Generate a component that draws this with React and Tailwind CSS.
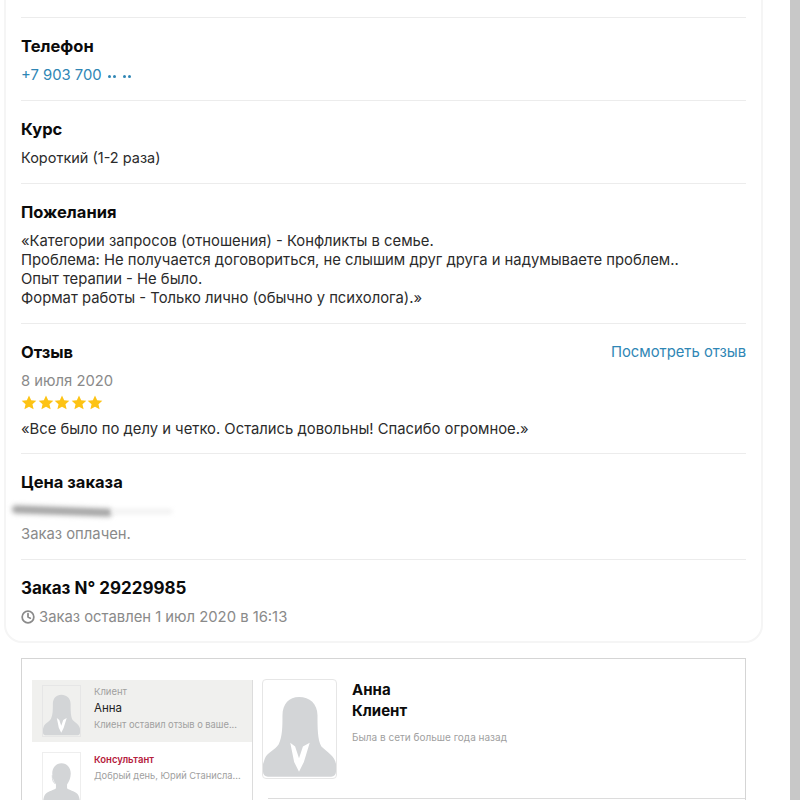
import { Clock } from 'lucide-react';

const FONT = { fontFamily: 'Inter, "Noto Sans", sans-serif' };

function Woman({ className }) {
  return (
    <svg viewBox="0 0 75 100" className={className}>
      <path
        fill="#d3d5d7"
        d="M37 17C27 17 20 24 20 36C20 48 20 58 16 66C12 72 5 74 2 80L0 86V94C0 97 2 99 5 99H70C73 99 75 97 75 94V86C74 78 66 74 60 68C56 62 56 48 56 36C56 24 48 17 37 17z"
      />
      <path fill="#ffffff" d="M28 64L33 68L37 80L41 68L48 64L42 84L37 94L32 84z" />
    </svg>
  );
}

function Man({ className }) {
  return (
    <svg viewBox="0 -3 40 52" className={className}>
      <path
        fill="#d3d5d7"
        d="M20 7c-6 0-10 5-10 11 0 5 2 9 4 12v4c-2 2-8 3-11 6-2 2-3 6-3 12h40c0-6-1-10-3-12-3-3-9-4-11-6v-4c2-3 4-7 4-12 0-6-4-11-10-11z"
      />
      <path fill="none" stroke="#d3d5d7" strokeWidth="1" d="M10 20c0 5 1 8 3 9" />
    </svg>
  );
}

function Section({ title, titleClass, children, right, last }) {
  return (
    <div className={`border-t border-[#ececec] pt-[17px] ${last ? '' : 'pb-[14px]'}`}>
      <div className="flex items-center justify-between h-[22px]">
        <h3 className={`font-bold text-[#0b0b0b] leading-[22px] ${titleClass || 'text-[16.5px]'}`}>{title}</h3>
        {right}
      </div>
      {children}
    </div>
  );
}

export default function App() {
  return (
    <div className="h-[800px] overflow-hidden bg-white flex" style={FONT}>
      <div className="flex-1 min-w-0">
        <div className="ml-1 w-[759px] mt-[-40px] h-[683px] rounded-b-[18px] border-2 border-[#f5f5f5] pl-[15px] pr-[15px] pt-[55px]">
          <Section title="Телефон">
            <p className="mt-[7px] flex items-center gap-[6px] text-[14.8px] leading-[22px] text-[#2f86b5]">
              <span>+7 903 700</span>
              <span className="flex items-center gap-[7px] pt-[2px]">
                <span className="flex gap-[2px]">
                  <span className="w-[3px] h-[3px] rounded-full bg-[#2f86b5]" />
                  <span className="w-[3px] h-[3px] rounded-full bg-[#2f86b5]" />
                </span>
                <span className="flex gap-[2px]">
                  <span className="w-[3px] h-[3px] rounded-full bg-[#2f86b5]" />
                  <span className="w-[3px] h-[3px] rounded-full bg-[#2f86b5]" />
                </span>
              </span>
            </p>
          </Section>
          <Section title="Курс">
            <p className="mt-[7px] text-[14.5px] leading-[22px] text-[#2b2b2b]">Короткий (1-2 раза)</p>
          </Section>
          <Section title="Пожелания">
            <p className="mt-[9px] mb-[1px] text-[14.8px] leading-[19px] text-[#2b2b2b]">
              «Категории запросов (отношения) - Конфликты в семье.
              <br />
              Проблема: Не получается договориться, не слышим друг друга и надумываете проблем..
              <br />
              Опыт терапии - Не было.
              <br />
              Формат работы - Только лично (обычно у психолога).»
            </p>
          </Section>
          <Section
            title="Отзыв"
            right={<a className="text-[14.8px] text-[#2f86b5]">Посмотреть отзыв</a>}
          >
            <p className="mt-[8px] text-[14.8px] leading-[20px] text-[#8a8a8a]">8 июля 2020</p>
            <div className="flex h-[14px] mt-[4px] gap-[0.5px]">
              {[0, 1, 2, 3, 4].map((i) => (
                <svg key={i} viewBox="0 0 16 16" className="w-4 h-[15px]">
                  <path fill="#fdc314" d="M8 .5L10.3 5.6L15.8 6.2L11.7 9.9L12.9 15.3L8 12.5L3.1 15.3L4.3 9.9L.2 6.2L5.7 5.6z" />
                </svg>
              ))}
            </div>
            <p className="mt-[11px] text-[14.8px] leading-[19px] text-[#2b2b2b]">
              «Все было по делу и четко. Остались довольны! Спасибо огромное.»
            </p>
          </Section>
          <Section title="Цена заказа">
            <div className="mt-[11px] h-[14px] flex items-center">
              <div className="ml-[-9px] w-[100px] h-[8px] bg-[#a4a4a4] rounded-full blur-[2.5px] rotate-[2deg]" />
              <div className="w-[60px] h-[5px] bg-[#f1f1f1] blur-[2px]" />
            </div>
            <p className="mt-[6px] mb-[1px] text-[14.8px] leading-[20px] text-[#8a8a8a]">Заказ оплачен.</p>
          </Section>
          <Section title="Заказ N° 29229985" titleClass="text-[17px]" last>
            <div className="mt-[8px] flex items-center gap-1 text-[#8a8a8a]">
              <Clock size={14} strokeWidth={3} />
              <span className="text-[14.8px] leading-[20px]">Заказ оставлен 1 июл 2020 в 16:13</span>
            </div>
          </Section>
        </div>

        <div className="ml-[21px] mt-[15px] w-[725px] h-[200px] border border-[#d5d5d5] flex pt-[21px] pl-[10px]">
          <div className="w-[221px] border-r border-[#dcdcdc] shrink-0">
            <div className="flex h-[62px] bg-[#f0f0ee] pl-[10px] pt-[5px]">
              <div className="w-[39px] h-[52px] border border-[#e6e6e6] overflow-hidden shrink-0">
                <Woman className="w-full h-full" />
              </div>
              <div className="ml-[13px] min-w-0 pt-[1px]">
                <p className="text-[9.5px] leading-[12px] text-[#a0a0a0]">Клиент</p>
                <p className="mt-[2px] text-[11.5px] leading-[16px] text-[#222]">Анна</p>
                <p className="mt-[3px] text-[9.3px] leading-[12px] text-[#a0a0a0] whitespace-nowrap">Клиент оставил отзыв о ваше...</p>
              </div>
            </div>
            <div className="flex pl-[10px] pt-[10px]">
              <div className="w-[39px] h-[52px] border border-[#eeeeee] overflow-hidden shrink-0">
                <Man className="w-full h-full" />
              </div>
              <div className="ml-[13px] min-w-0 pt-[2px]">
                <p className="text-[9.5px] leading-[12px] font-semibold text-[#b5203c]">Консультант</p>
                <p className="mt-[4px] text-[9.3px] leading-[12px] text-[#a0a0a0] whitespace-nowrap">Добрый день, Юрий Станисла...</p>
              </div>
            </div>
          </div>
          <div className="flex-1 pl-[9px] mt-[-1px]">
            <div className="flex">
              <div className="w-[75px] h-[100px] border border-[#e6e6e6] rounded-[4px] overflow-hidden shrink-0">
                <Woman className="w-full h-full" />
              </div>
              <div className="ml-[15px]">
                <p className="text-[15px] leading-[21px] font-bold text-[#0b0b0b]">Анна</p>
                <p className="text-[15px] leading-[21px] font-bold text-[#0b0b0b]">Клиент</p>
                <p className="mt-[10px] text-[10px] leading-[12px] text-[#a0a0a0]">Была в сети больше года назад</p>
              </div>
            </div>
            <div className="ml-[6px] mt-[19px] border-t border-[#dcdcdc]" />
          </div>
        </div>
      </div>
      <div className="w-[10px] bg-[#c8c8c8] shrink-0" />
    </div>
  );
}
